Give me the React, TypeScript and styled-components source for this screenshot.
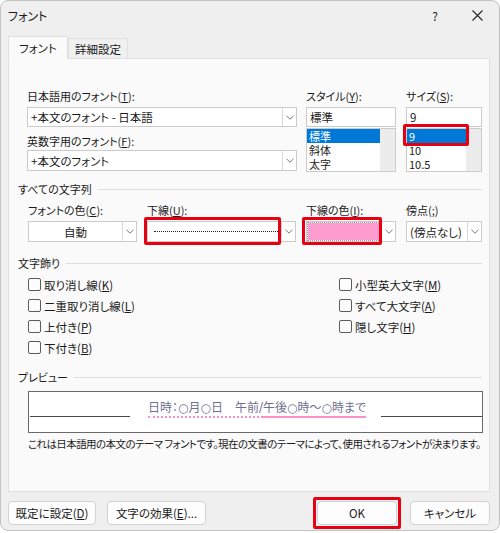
import React from "react";
import styled, { createGlobalStyle } from "styled-components";

const GlobalStyle = createGlobalStyle`
  html, body { margin: 0; padding: 0; background: #ffffff; }
  body {
    font-family: "Noto Sans CJK JP", "Noto Sans", sans-serif;
    font-size: 11px;
    color: #1b1b1b;
    font-feature-settings: "palt";
  }
  * { box-sizing: border-box; }
`;

const RED = "#e60012";

const Window = styled.div`
  width: 500px;
  height: 531px;
  border: 1px solid #c4c4c4;
  border-radius: 8px;
  background: #efefef;
  display: flex;
  flex-direction: column;
  overflow: hidden;
`;

const TitleBar = styled.div`
  height: 29px;
  display: flex;
  align-items: center;
  padding-left: 7px;
  font-size: 12px;
`;

const TitleText = styled.div`
  flex: 1;
`;

const TitleButton = styled.div<{ $w: number }>`
  width: ${(p) => p.$w}px;
  height: 29px;
  display: flex;
  align-items: center;
  justify-content: center;
  font-size: 12px;
  color: #222;
`;

const TabRow = styled.div`
  display: flex;
  align-items: flex-end;
  margin-top: 5px;
  padding-left: 7px;
  height: 23px;
  position: relative;
  z-index: 1;
`;

const Tab = styled.div<{ $active?: boolean; $w: number }>`
  width: ${(p) => p.$w}px;
  height: ${(p) => (p.$active ? 23 : 21)}px;
  display: flex;
  align-items: center;
  justify-content: center;
  font-size: 11.5px;
  background: ${(p) => (p.$active ? "#fafafa" : "#f0f0f0")};
  border: 1px solid #e0e0e0;
  border-bottom: ${(p) => (p.$active ? "1px solid #fafafa" : "1px solid #e0e0e0")};
  margin-bottom: -1px;
`;

const Panel = styled.div`
  margin-left: 7px;
  width: 482px;
  height: 434px;
  background: #fafafa;
  border: 1px solid #e0e0e0;
  padding: 0 0 0 9px;
  display: flex;
  flex-direction: column;
`;

const Indent = styled.div<{ $mt: number; $gap?: number; $ml?: number }>`
  margin-left: ${(p) => p.$ml ?? 9}px;
  margin-top: ${(p) => p.$mt}px;
  display: flex;
  gap: ${(p) => p.$gap ?? 9}px;
`;

const Column = styled.div<{ $w: number; $ml?: number }>`
  width: ${(p) => p.$w}px;
  margin-left: ${(p) => p.$ml ?? 0}px;
  display: flex;
  flex-direction: column;
`;

const Label = styled.div<{ $mt?: number }>`
  height: 16px;
  line-height: 16px;
  margin-top: ${(p) => p.$mt ?? 0}px;
  white-space: nowrap;
`;

const U = styled.span`
  text-decoration: underline;
  text-underline-offset: 1px;
`;

const ComboBox = styled.div<{ $h?: number; $mt?: number }>`
  position: relative;
  height: ${(p) => p.$h ?? 21}px;
  margin-top: ${(p) => p.$mt ?? 0}px;
  display: flex;
  background: #ffffff;
  border: 1px solid #cbcbcb;
`;

const ComboText = styled.div<{ $center?: boolean; $visible?: boolean }>`
  flex: 1;
  display: flex;
  align-items: center;
  justify-content: ${(p) => (p.$center ? "center" : "flex-start")};
  padding-left: ${(p) => (p.$center ? 0 : 3)}px;
  font-size: 11.5px;
  white-space: nowrap;
  overflow: ${(p) => (p.$visible ? "visible" : "hidden")};
  position: relative;
`;

const ComboArrow = styled.div`
  width: 14px;
  display: flex;
  align-items: center;
  justify-content: center;
  border-left: 1px solid #dadada;
`;

const Chevron = () => (
  <svg width="8" height="5" viewBox="0 0 8 5">
    <path d="M0.5 0.8 L4 4.2 L7.5 0.8" fill="none" stroke="#777" strokeWidth="1" />
  </svg>
);

const TextInput = styled.div`
  height: 20px;
  margin-top: 3px;
  background: #ffffff;
  border: 1px solid #cbcbcb;
  display: flex;
  align-items: center;
  padding-left: 3px;
  font-size: 11.5px;
`;

const ListBox = styled.div`
  height: 44px;
  margin-top: 1px;
  background: #ffffff;
  border: 1px solid #cbcbcb;
  display: flex;
`;

const ListItems = styled.div`
  flex: 1;
  display: flex;
  flex-direction: column;
`;

const ListItem = styled.div<{ $sel?: boolean }>`
  position: relative;
  height: 14px;
  line-height: 14px;
  padding-left: 2px;
  font-size: 11px;
  overflow: visible;
  background: ${(p) => (p.$sel ? "#0078d7" : "transparent")};
  color: ${(p) => (p.$sel ? "#ffffff" : "#1b1b1b")};
`;

const ScrollTrack = styled.div`
  width: 15px;
  background: #ececec;
`;

const RedFrame = styled.div<{ $t: number; $l: number; $r: number; $b: number }>`
  position: absolute;
  top: ${(p) => p.$t}px;
  left: ${(p) => p.$l}px;
  right: ${(p) => p.$r}px;
  bottom: ${(p) => p.$b}px;
  border: 3px solid ${RED};
  border-radius: 2px;
  pointer-events: none;
`;

const Section = styled.div<{ $mt: number }>`
  margin-top: ${(p) => p.$mt}px;
  display: flex;
  align-items: center;
  gap: 6px;
  height: 16px;
  width: 464px;
  white-space: nowrap;
`;

const SectionLine = styled.div`
  flex: 1;
  height: 1px;
  background: #dedede;
`;

const DottedLine = styled.div`
  width: 124px;
  margin-left: 3px;
  border-bottom: 1px dotted #222;
`;

const Swatch = styled.div`
  position: absolute;
  top: 1px;
  left: 1px;
  right: 1px;
  bottom: 1px;
  background: #ff9ccf;
  outline: 1px dotted #999;
`;

const CheckGrid = styled.div`
  margin-left: 10px;
  margin-top: 3px;
  display: grid;
  grid-template-columns: 311px 1fr;
  grid-auto-rows: 21px;
`;

const CheckRow = styled.div<{ $col: number; $row: number }>`
  grid-column: ${(p) => p.$col};
  grid-row: ${(p) => p.$row};
  display: flex;
  align-items: center;
  gap: 3px;
  font-size: 11.5px;
  white-space: nowrap;
`;

const Box = styled.div`
  width: 13px;
  height: 13px;
  border: 1px solid #5c5c5c;
  border-radius: 2px;
  background: #fdfdfd;
`;

const PreviewBox = styled.div`
  margin-left: 10px;
  margin-top: 6px;
  width: 455px;
  height: 42px;
  border: 1px solid #6a6a6a;
  background: #ffffff;
  display: flex;
  align-items: flex-end;
  padding: 0 0 14px 1px;
`;

const PreviewLine = styled.div<{ $w: number; $auto?: boolean }>`
  width: ${(p) => p.$w}px;
  height: 1.5px;
  background: #4a4a4a;
  margin-bottom: 1px;
  margin-left: ${(p) => (p.$auto ? "auto" : "0")};
`;

const PreviewText = styled.div`
  margin: 0 0 0 18px;
  display: flex;
  font-family: "DejaVu Serif", "Noto Sans CJK JP", serif;
  font-size: 12px;
  line-height: 15px;
  color: #6f6f92;
  white-space: nowrap;
`;

const Underlined = styled.span<{ $dotted?: boolean }>`
  border-bottom: 2px ${(p) => (p.$dotted ? "dotted" : "solid")} #ff8fca;
`;

const Caption = styled.div`
  margin-left: 10px;
  margin-top: 3px;
  height: 16px;
  line-height: 16px;
  font-size: 10.5px;
  white-space: nowrap;
  letter-spacing: -0.58px;
`;

const ButtonRow = styled.div`
  display: flex;
  align-items: center;
  padding-left: 7px;
  margin-top: 5px;
  height: 31px;
`;

const Button = styled.div<{ $w: number; $ml?: number }>`
  width: ${(p) => p.$w}px;
  height: 24px;
  margin-left: ${(p) => p.$ml ?? 0}px;
  display: flex;
  align-items: center;
  justify-content: center;
  background: #fdfdfd;
  border: 1px solid #d2d2d2;
  border-radius: 4px;
  font-size: 11.5px;
  white-space: nowrap;
`;

const OkFrame = styled.div<{ $ml: number }>`
  margin-left: ${(p) => p.$ml}px;
  border: 3px solid ${RED};
  padding: 1px;
  border-radius: 2px;
`;

const checks: [number, number, string, string][] = [
  [1, 1, "取り消し線", "K"],
  [1, 2, "二重取り消し線", "L"],
  [1, 3, "上付き", "P"],
  [1, 4, "下付き", "B"],
  [2, 1, "小型英大文字", "M"],
  [2, 2, "すべて大文字", "A"],
  [2, 3, "隠し文字", "H"],
];

export default function App() {
  return (
    <>
      <GlobalStyle />
      <Window>
        <TitleBar>
          <TitleText>フォント</TitleText>
          <TitleButton $w={40}>?</TitleButton>
          <TitleButton $w={44}>
            <svg width="11" height="11" viewBox="0 0 11 11">
              <path d="M0.5 0.5 L10.5 10.5 M10.5 0.5 L0.5 10.5" stroke="#222" strokeWidth="1.1" />
            </svg>
          </TitleButton>
        </TitleBar>
        <TabRow>
          <Tab $active $w={60}>フォント</Tab>
          <Tab $w={60}>詳細設定</Tab>
        </TabRow>
        <Panel>
          <Indent $mt={29}>
            <Column $w={270}>
              <Label>日本語用のフォント(<U>T</U>):</Label>
              <ComboBox $h={20} $mt={3}>
                <ComboText>+本文のフォント - 日本語</ComboText>
                <ComboArrow><Chevron /></ComboArrow>
              </ComboBox>
              <Label $mt={6}>英数字用のフォント(<U>F</U>):</Label>
              <ComboBox $mt={1}>
                <ComboText>+本文のフォント</ComboText>
                <ComboArrow><Chevron /></ComboArrow>
              </ComboBox>
            </Column>
            <Column $w={90}>
              <Label>スタイル(<U>Y</U>):</Label>
              <TextInput>標準</TextInput>
              <ListBox>
                <ListItems>
                  <ListItem $sel>標準</ListItem>
                  <ListItem>斜体</ListItem>
                  <ListItem>太字</ListItem>
                </ListItems>
                <ScrollTrack />
              </ListBox>
            </Column>
            <Column $w={76} $ml={1}>
              <Label>サイズ(<U>S</U>):</Label>
              <TextInput>9</TextInput>
              <ListBox>
                <ListItems>
                  <ListItem $sel>
                    9
                    <RedFrame $t={-5} $l={-4} $r={-3} $b={-3} />
                  </ListItem>
                  <ListItem>10</ListItem>
                  <ListItem>10.5</ListItem>
                </ListItems>
                <ScrollTrack />
              </ListBox>
            </Column>
          </Indent>

          <Section $mt={9}>
            すべての文字列<SectionLine />
          </Section>

          <Indent $mt={5} $gap={10} $ml={10}>
            <Column $w={109}>
              <Label>フォントの色(<U>C</U>):</Label>
              <ComboBox $mt={3}>
                <ComboText $center>自動</ComboText>
                <ComboArrow><Chevron /></ComboArrow>
              </ComboBox>
            </Column>
            <Column $w={149}>
              <Label>下線(<U>U</U>):</Label>
              <ComboBox $mt={3}>
                <ComboText $visible>
                  <DottedLine />
                  <RedFrame $t={-5} $l={-4} $r={0} $b={-4} />
                </ComboText>
                <ComboArrow><Chevron /></ComboArrow>
              </ComboBox>
            </Column>
            <Column $w={90}>
              <Label>下線の色(<U>I</U>):</Label>
              <ComboBox $mt={3}>
                <ComboText $visible>
                  <Swatch />
                  <RedFrame $t={-5} $l={-5} $r={-1} $b={-4} />
                </ComboText>
                <ComboArrow><Chevron /></ComboArrow>
              </ComboBox>
            </Column>
            <Column $w={76}>
              <Label>傍点(<U>;</U>)</Label>
              <ComboBox $mt={3}>
                <ComboText>(傍点なし)</ComboText>
                <ComboArrow><Chevron /></ComboArrow>
              </ComboBox>
            </Column>
          </Indent>

          <Section $mt={13}>
            文字飾り<SectionLine />
          </Section>

          <CheckGrid>
            {checks.map(([c, r, t, k]) => (
              <CheckRow key={t} $col={c} $row={r}>
                <Box />
                <span>
                  {t}(<U>{k}</U>)
                </span>
              </CheckRow>
            ))}
          </CheckGrid>

          <Section $mt={11}>
            プレビュー<SectionLine />
          </Section>

          <PreviewBox>
            <PreviewLine $w={100} />
            <PreviewText>
              <Underlined $dotted>日時：○月○日　午前/</Underlined>
              <Underlined>午後○時～○時まで</Underlined>
            </PreviewText>
            <PreviewLine $w={101} $auto />
          </PreviewBox>

          <Caption>
            これは日本語用の本文のテーマ フォントです。現在の文書のテーマによって、使用されるフォントが決まります。
          </Caption>
        </Panel>
        <ButtonRow>
          <Button $w={88}>
            <span>既定に設定(<U>D</U>)</span>
          </Button>
          <Button $w={99} $ml={11}>
            <span>文字の効果(<U>E</U>)...</span>
          </Button>
          <OkFrame $ml={107}>
            <Button $w={80}>OK</Button>
          </OkFrame>
          <Button $w={80} $ml={9}>キャンセル</Button>
        </ButtonRow>
      </Window>
    </>
  );
}
